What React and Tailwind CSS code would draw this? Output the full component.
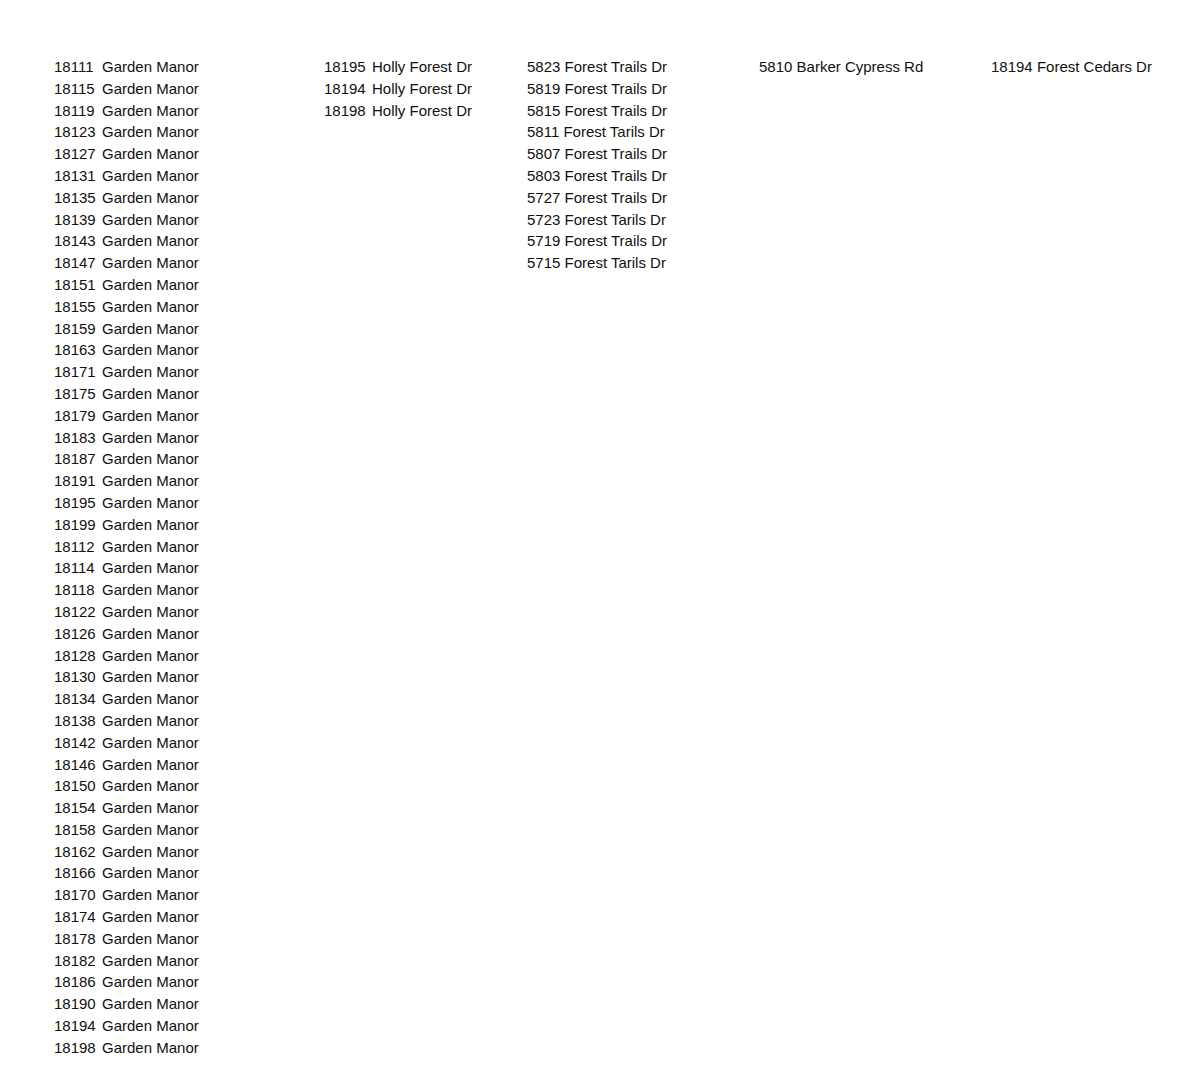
import React from 'react';

const gardenManor = [
  18111, 18115, 18119, 18123, 18127, 18131, 18135, 18139, 18143, 18147, 18151,
  18155, 18159, 18163, 18171, 18175, 18179, 18183, 18187, 18191, 18195, 18199,
  18112, 18114, 18118, 18122, 18126, 18128, 18130, 18134, 18138, 18142, 18146,
  18150, 18154, 18158, 18162, 18166, 18170, 18174, 18178, 18182, 18186, 18190,
  18194, 18198,
];

const hollyForest = [18195, 18194, 18198];

const forestTrails = [
  '5823 Forest Trails Dr',
  '5819 Forest Trails Dr',
  '5815 Forest Trails Dr',
  '5811 Forest Tarils Dr',
  '5807 Forest Trails Dr',
  '5803 Forest Trails Dr',
  '5727 Forest Trails Dr',
  '5723 Forest Tarils Dr',
  '5719 Forest Trails Dr',
  '5715 Forest Tarils Dr',
];

// number and street sit in their own cells, like two spreadsheet columns
const SplitColumn = ({ numbers, street, className }) => (
  <div className={className}>
    {numbers.map((n, i) => (
      <div key={i} className="flex h-[21.8px] whitespace-nowrap leading-[21.8px]">
        <span className="w-[48px] tabular-nums">{n}</span>
        <span>{street}</span>
      </div>
    ))}
  </div>
);

const Column = ({ items, className }) => (
  <div className={className}>
    {items.map((item, i) => (
      <div key={i} className="h-[21.8px] whitespace-nowrap leading-[21.8px]">
        {item}
      </div>
    ))}
  </div>
);

const App = () => {
  return (
    <div
      className="flex min-h-[1090px] bg-white pl-[54px] pt-[56px] text-[15px] text-[#111]"
      style={{ fontFamily: '"Liberation Sans", Arial, sans-serif' }}
    >
      <SplitColumn className="w-[270px]" numbers={gardenManor} street="Garden Manor" />
      <SplitColumn className="w-[203px]" numbers={hollyForest} street="Holly Forest Dr" />
      <Column className="w-[232px]" items={forestTrails} />
      <Column className="w-[232px]" items={['5810 Barker Cypress Rd']} />
      <Column items={['18194 Forest Cedars Dr']} />
    </div>
  );
};

export default App;
